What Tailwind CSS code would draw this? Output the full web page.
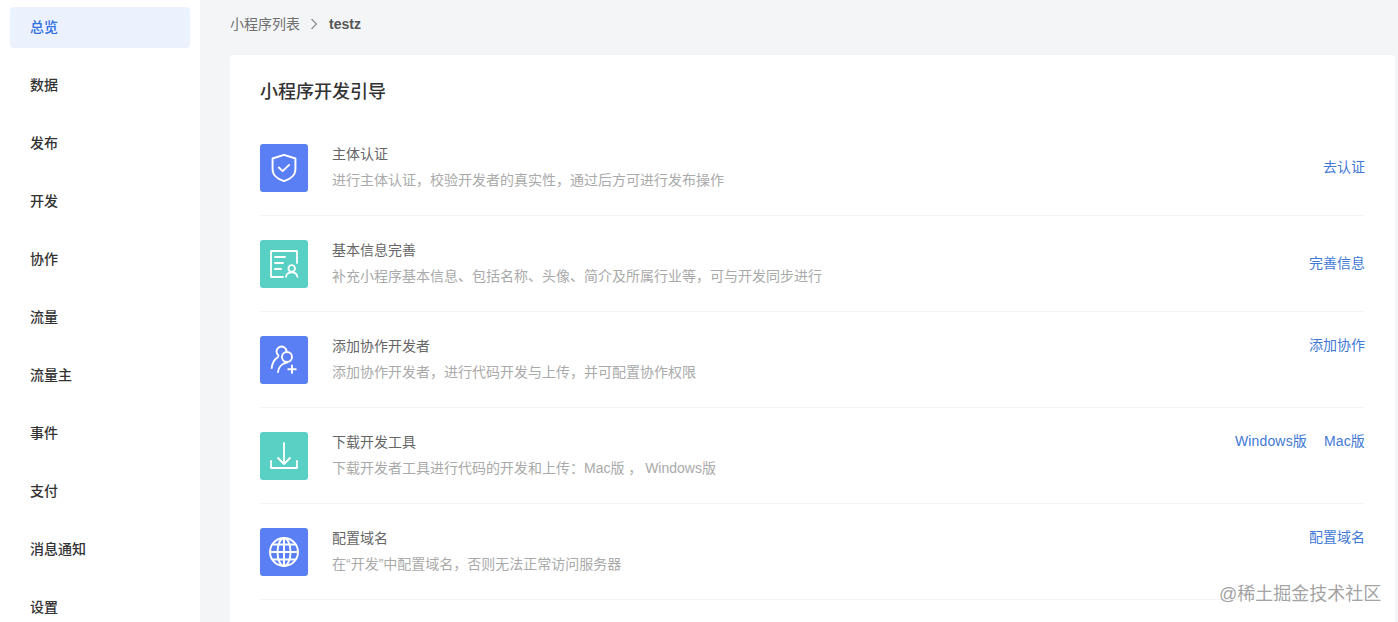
<!DOCTYPE html>
<html lang="zh-CN">
<head>
    <meta charset="UTF-8">
    <title>小程序开发引导</title>
    <script src="https://cdn.jsdelivr.net/npm/@tailwindcss/browser@4"></script>
</head>
<body class="h-[622px] overflow-hidden bg-[#f3f5f7] font-['Liberation_Sans','Noto_Sans_CJK_SC',sans-serif]">
<div class="flex h-[622px] relative">
    <!-- sidebar -->
    <nav class="w-[200px] shrink-0 bg-white px-[10px] pt-[7px] text-[14px] font-medium text-[#333]">
        <a class="flex items-center h-[41px] mb-[17px] pl-[20px] rounded-[4px] bg-[#ebf1fd] text-[#2f6fe0]">总览</a>
        <a class="flex items-center h-[41px] mb-[17px] pl-[20px]">数据</a>
        <a class="flex items-center h-[41px] mb-[17px] pl-[20px]">发布</a>
        <a class="flex items-center h-[41px] mb-[17px] pl-[20px]">开发</a>
        <a class="flex items-center h-[41px] mb-[17px] pl-[20px]">协作</a>
        <a class="flex items-center h-[41px] mb-[17px] pl-[20px]">流量</a>
        <a class="flex items-center h-[41px] mb-[17px] pl-[20px]">流量主</a>
        <a class="flex items-center h-[41px] mb-[17px] pl-[20px]">事件</a>
        <a class="flex items-center h-[41px] mb-[17px] pl-[20px]">支付</a>
        <a class="flex items-center h-[41px] mb-[17px] pl-[20px]">消息通知</a>
        <a class="flex items-center h-[41px] mb-[17px] pl-[20px]">设置</a>
    </nav>

    <main class="flex-1 pl-[30px] pr-[3px]">
        <!-- breadcrumb -->
        <div class="flex items-center h-[55px] pb-[7px] text-[14px] text-[#707070]">
            <span>小程序列表</span>
            <svg class="mx-[9px]" width="11" height="12" viewBox="0 0 11 12" fill="none" stroke="#888" stroke-width="1.1"><path d="M2.5 1l5 5-5 5"/></svg>
            <span class="font-bold text-[#555]">testz</span>
        </div>

        <!-- card -->
        <section class="h-[567px] bg-white rounded-t-[3px] pl-[30px] pr-[30px]">
            <h1 class="pt-[25px] h-[65px] text-[18px] leading-[24px] font-medium text-[#333]">小程序开发引导</h1>

            <div class="flex h-[96px] pt-[24px] border-b border-[#f3f4f6]">
                <div class="flex items-center justify-center w-[48px] h-[48px] rounded-[3px] bg-[#5a7ff5]">
                    <svg width="30" height="32" viewBox="0 0 26 28" fill="none" stroke="#fff" stroke-width="1.7" stroke-linecap="round" stroke-linejoin="round"><path d="M13 2.500l10 3.200v9.300c0 5-4.500 8.800-10 10.500C7.500 23.800 3 20 3 15V5.700z"/><path d="M8.500 13.500l3.300 3.200 5.700-5.400"/></svg>
                </div>
                <div class="ml-[24px] flex-1">
                    <div class="text-[14px] leading-[20px] text-[#666]">主体认证</div>
                    <div class="mt-[6px] text-[14px] leading-[20px] text-[#aaa]">进行主体认证，校验开发者的真实性，通过后方可进行发布操作</div>
                </div>
                <a class="text-[14px] leading-[20px] mt-[13px] text-[#4279d6]">去认证</a>
            </div>

            <div class="flex h-[96px] pt-[24px] border-b border-[#f3f4f6]">
                <div class="flex items-center justify-center w-[48px] h-[48px] rounded-[3px] bg-[#58d0c4]">
                    <svg width="30" height="30" viewBox="0 0 30 30" fill="none" stroke="#fff" stroke-width="1.8" stroke-linecap="round" stroke-linejoin="round"><path d="M14 28H2V2h26v12"/><path d="M6 8h10M6 14h8M6 20h6"/><circle cx="22.700" cy="19.500" r="3.300"/><path d="M17 27.800c.4-2.800 2.600-4.400 5.700-4.400s5.300 1.600 5.700 4.400"/></svg>
                </div>
                <div class="ml-[24px] flex-1">
                    <div class="text-[14px] leading-[20px] text-[#666]">基本信息完善</div>
                    <div class="mt-[6px] text-[14px] leading-[20px] text-[#aaa]">补充小程序基本信息、包括名称、头像、简介及所属行业等，可与开发同步进行</div>
                </div>
                <a class="text-[14px] leading-[20px] mt-[13px] text-[#4279d6]">完善信息</a>
            </div>

            <div class="flex h-[96px] pt-[24px] border-b border-[#f3f4f6]">
                <div class="flex items-center justify-center w-[48px] h-[48px] rounded-[3px] bg-[#5a7ff5]">
                    <svg width="30" height="30" viewBox="0 0 30 30" fill="none" stroke="#fff" stroke-width="1.9" stroke-linecap="round" stroke-linejoin="round"><path d="M9.500 10.500A5 5 0 1 1 17.500 6.500"/><circle cx="18" cy="12" r="5"/><path d="M2.700 23c.4-4.800 2.600-8.500 6.300-11"/><path d="M9 27c.4-4.700 4-8.600 9-9.500"/><path d="M23 20.500v7.500M19.200 24.200h7.600"/></svg>
                </div>
                <div class="ml-[24px] flex-1">
                    <div class="text-[14px] leading-[20px] text-[#666]">添加协作开发者</div>
                    <div class="mt-[6px] text-[14px] leading-[20px] text-[#aaa]">添加协作开发者，进行代码开发与上传，并可配置协作权限</div>
                </div>
                <a class="text-[14px] leading-[20px] -mt-[1px] text-[#4279d6]">添加协作</a>
            </div>

            <div class="flex h-[96px] pt-[24px] border-b border-[#f3f4f6]">
                <div class="flex items-center justify-center w-[48px] h-[48px] rounded-[3px] bg-[#58d0c4]">
                    <svg width="30" height="30" viewBox="0 0 30 30" fill="none" stroke="#fff" stroke-width="1.8" stroke-linecap="round" stroke-linejoin="round"><path d="M15 2v21M9 17l6 6 6-6"/><path d="M2 20v7h26v-7"/></svg>
                </div>
                <div class="ml-[24px] flex-1">
                    <div class="text-[14px] leading-[20px] text-[#666]">下载开发工具</div>
                    <div class="mt-[6px] text-[14px] leading-[20px] text-[#aaa]">下载开发者工具进行代码的开发和上传：Mac版 ，&thinsp;Windows版</div>
                </div>
                <div class="flex gap-[17px] text-[14px] leading-[20px] -mt-[1px] text-[#4279d6] tracking-[0.15px]"><a>Windows版</a><a>Mac版</a></div>
            </div>

            <div class="flex h-[96px] pt-[24px] border-b border-[#f3f4f6]">
                <div class="flex items-center justify-center w-[48px] h-[48px] rounded-[3px] bg-[#5a7ff5]">
                    <svg width="32" height="32" viewBox="0 0 32 32" fill="none" stroke="#fff" stroke-width="2"><circle cx="16" cy="16" r="14"/><ellipse cx="16" cy="16" rx="6.500" ry="14"/><path d="M16 2v28M2 16h28M4.500 8.500h23M4.500 23.500h23"/></svg>
                </div>
                <div class="ml-[24px] flex-1">
                    <div class="text-[14px] leading-[20px] text-[#666]">配置域名</div>
                    <div class="mt-[6px] text-[14px] leading-[20px] text-[#aaa]">在“开发”中配置域名，否则无法正常访问服务器</div>
                </div>
                <a class="text-[14px] leading-[20px] -mt-[1px] text-[#4279d6]">配置域名</a>
            </div>
        </section>
    </main>

    <!-- watermark -->
    <div class="absolute left-[1219px] top-[582px] text-[18px] leading-[24px] text-[#8a8a8a]/80">@稀土掘金技术社区</div>
</div>
</body>
</html>
